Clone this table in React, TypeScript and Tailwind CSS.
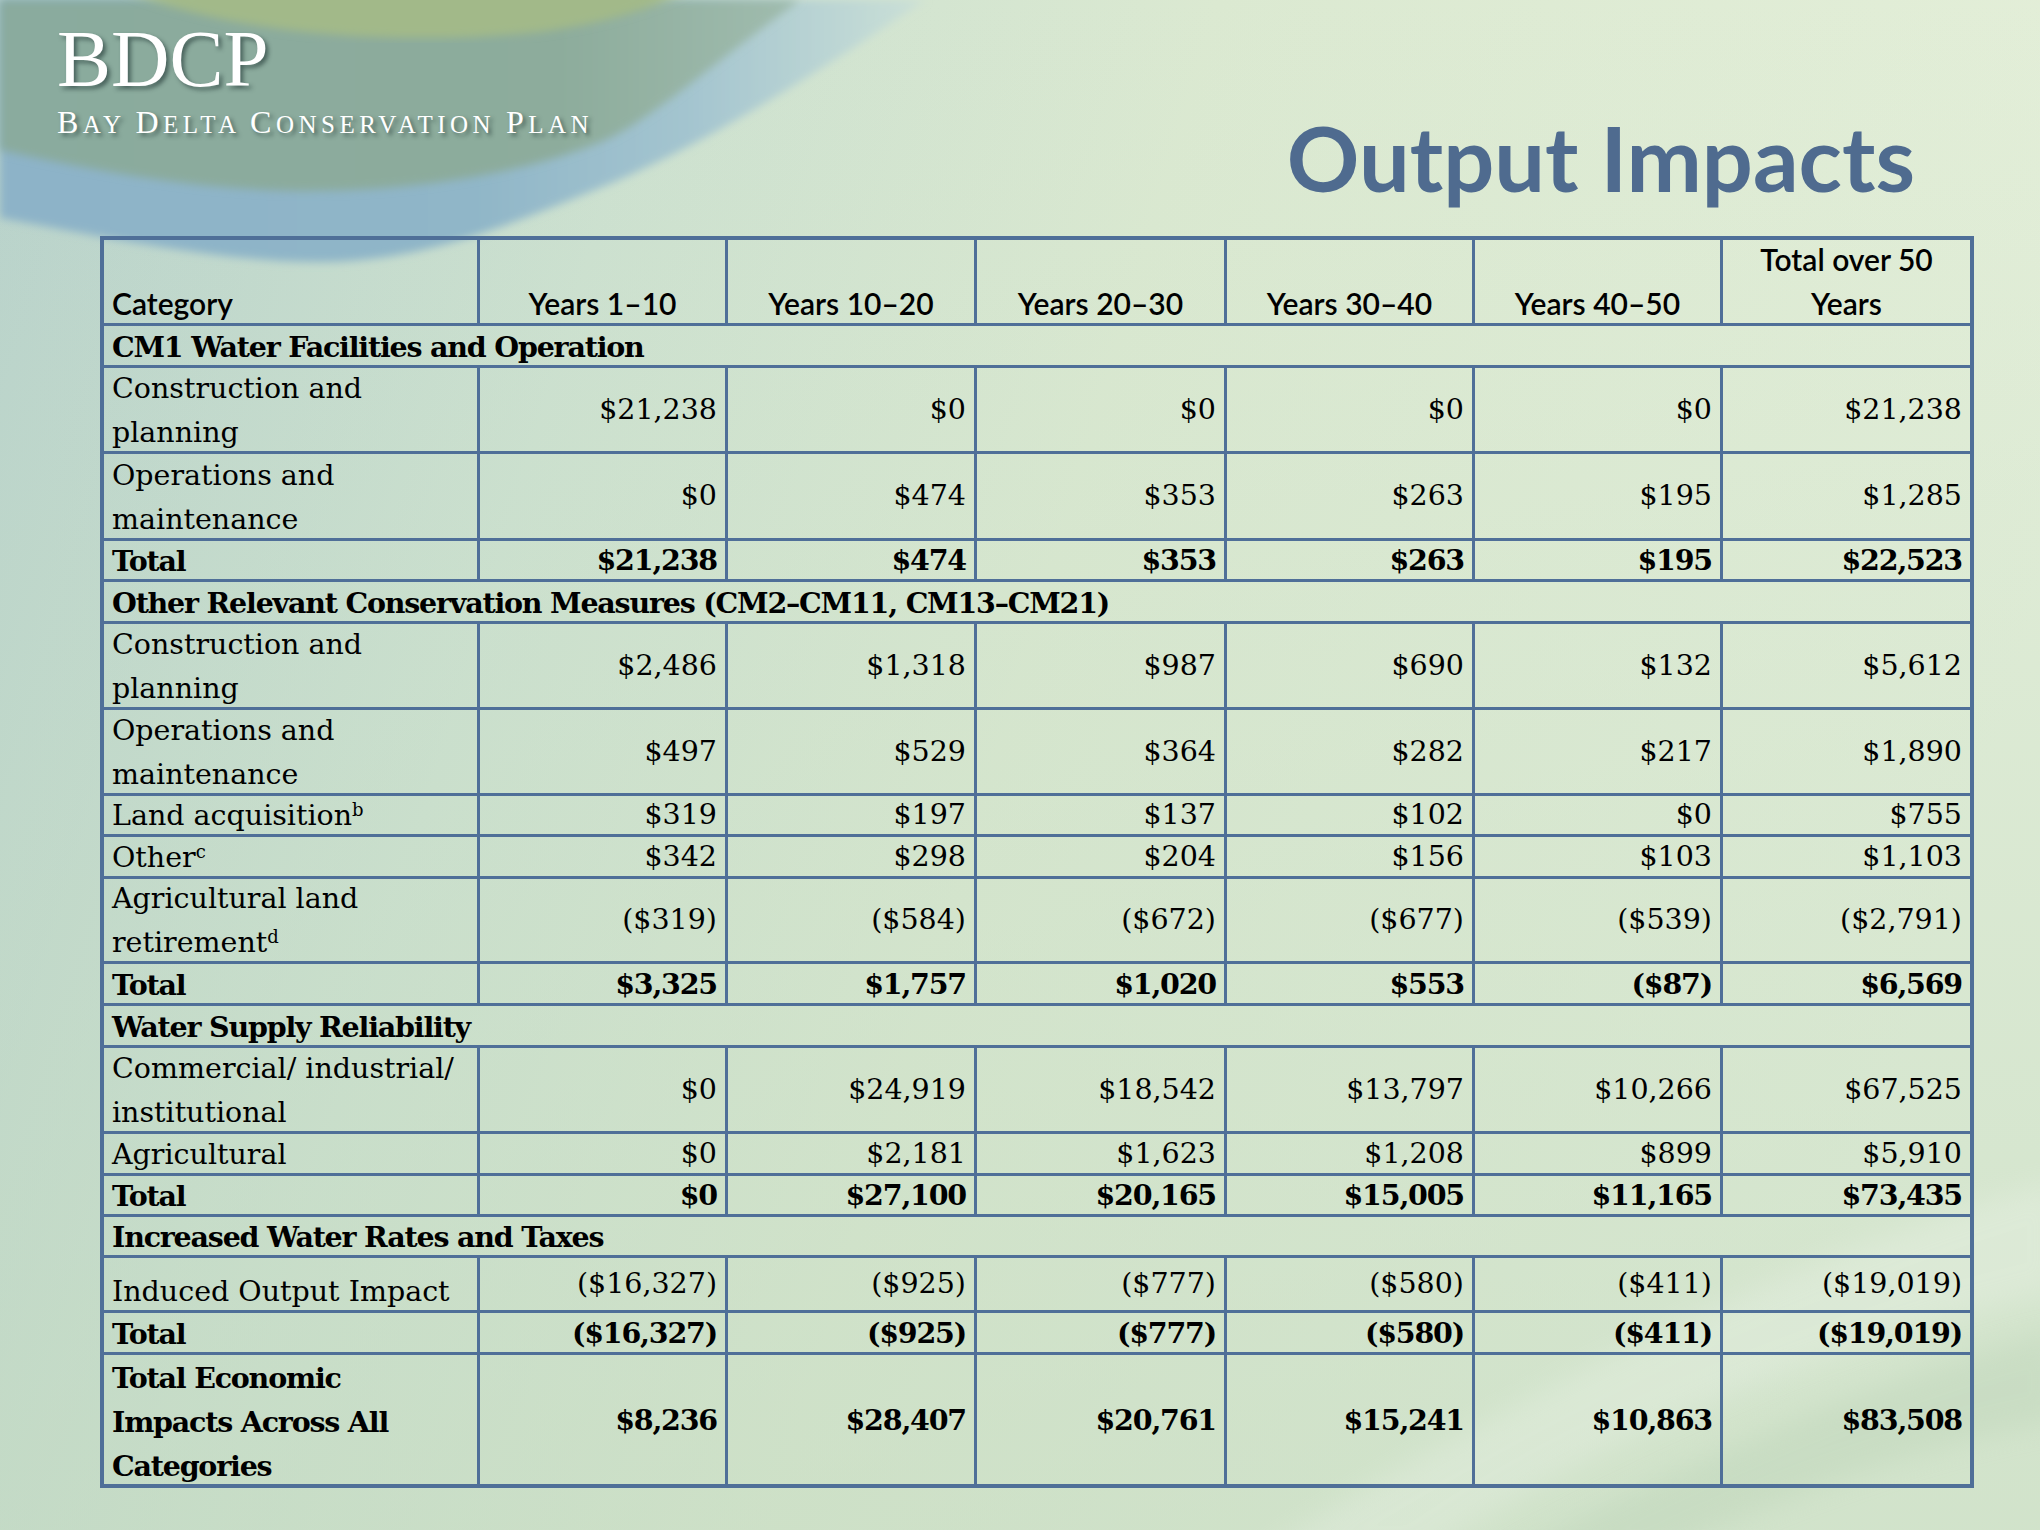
import React from "react";

type Row =
  | { kind: "section"; label: string; h: string }
  | { kind: "data"; label: React.ReactNode; vals: string[]; h: string; bold?: boolean; last?: boolean };

const sup = (s: string) => <sup className="text-[18px]">{s}</sup>;

const rows: Row[] = [
  { kind: "section", label: "CM1 Water Facilities and Operation", h: "h-[42px]" },
  { kind: "data", label: <>Construction and<br />planning</>, vals: ["$21,238", "$0", "$0", "$0", "$0", "$21,238"], h: "h-[86px]" },
  { kind: "data", label: <>Operations and<br />maintenance</>, vals: ["$0", "$474", "$353", "$263", "$195", "$1,285"], h: "h-[87px]" },
  { kind: "data", label: "Total", bold: true, vals: ["$21,238", "$474", "$353", "$263", "$195", "$22,523"], h: "h-[41px]" },
  { kind: "section", label: "Other Relevant Conservation Measures (CM2–CM11, CM13–CM21)", h: "h-[42px]" },
  { kind: "data", label: <>Construction and<br />planning</>, vals: ["$2,486", "$1,318", "$987", "$690", "$132", "$5,612"], h: "h-[86px]" },
  { kind: "data", label: <>Operations and<br />maintenance</>, vals: ["$497", "$529", "$364", "$282", "$217", "$1,890"], h: "h-[86px]" },
  { kind: "data", label: <>Land acquisition{sup("b")}</>, vals: ["$319", "$197", "$137", "$102", "$0", "$755"], h: "h-[41px]" },
  { kind: "data", label: <>Other{sup("c")}</>, vals: ["$342", "$298", "$204", "$156", "$103", "$1,103"], h: "h-[42px]" },
  { kind: "data", label: <>Agricultural land<br />retirement{sup("d")}</>, vals: ["($319)", "($584)", "($672)", "($677)", "($539)", "($2,791)"], h: "h-[85px]" },
  { kind: "data", label: "Total", bold: true, vals: ["$3,325", "$1,757", "$1,020", "$553", "($87)", "$6,569"], h: "h-[42px]" },
  { kind: "section", label: "Water Supply Reliability", h: "h-[42px]" },
  { kind: "data", label: <>Commercial/ industrial/<br />institutional</>, vals: ["$0", "$24,919", "$18,542", "$13,797", "$10,266", "$67,525"], h: "h-[86px]" },
  { kind: "data", label: "Agricultural", vals: ["$0", "$2,181", "$1,623", "$1,208", "$899", "$5,910"], h: "h-[42px]" },
  { kind: "data", label: "Total", bold: true, vals: ["$0", "$27,100", "$20,165", "$15,005", "$11,165", "$73,435"], h: "h-[41px]" },
  { kind: "section", label: "Increased Water Rates and Taxes", h: "h-[41px]" },
  { kind: "data", label: "Induced Output Impact", vals: ["($16,327)", "($925)", "($777)", "($580)", "($411)", "($19,019)"], h: "h-[55px]" },
  { kind: "data", label: "Total", bold: true, vals: ["($16,327)", "($925)", "($777)", "($580)", "($411)", "($19,019)"], h: "h-[42px]" },
  { kind: "data", label: <>Total Economic<br />Impacts Across All<br />Categories</>, bold: true, vals: ["$8,236", "$28,407", "$20,761", "$15,241", "$10,863", "$83,508"], h: "h-[129px]", last: true },
];

const headers = ["Years 1–10", "Years 10–20", "Years 20–30", "Years 30–40", "Years 40–50"];

function Background() {
  return (
    <svg className="absolute inset-0" width="2040" height="1530" viewBox="0 0 2040 1530">
      <defs>
        <linearGradient id="base" x1="0" y1="0" x2="2040" y2="600" gradientUnits="userSpaceOnUse">
          <stop offset="0" stopColor="#b7d1cb" />
          <stop offset="0.3" stopColor="#cde1d0" />
          <stop offset="0.55" stopColor="#dbe9d1" />
          <stop offset="1" stopColor="#e4efd9" />
        </linearGradient>
        <linearGradient id="baseV" x1="0" y1="0" x2="0" y2="1530" gradientUnits="userSpaceOnUse">
          <stop offset="0" stopColor="#c3dbc6" stopOpacity="0" />
          <stop offset="1" stopColor="#c2d9bf" stopOpacity="0.55" />
        </linearGradient>
        <linearGradient id="blue" x1="0" y1="0" x2="950" y2="0" gradientUnits="userSpaceOnUse">
          <stop offset="0" stopColor="#8db3c8" />
          <stop offset="0.5" stopColor="#90b6c8" />
          <stop offset="0.72" stopColor="#a3c4cf" />
          <stop offset="1" stopColor="#cfe3d8" />
        </linearGradient>
        <linearGradient id="teal" x1="0" y1="0" x2="800" y2="0" gradientUnits="userSpaceOnUse">
          <stop offset="0" stopColor="#8aab9e" />
          <stop offset="0.7" stopColor="#8dac9c" />
          <stop offset="1" stopColor="#a0bcae" />
        </linearGradient>
        <filter id="soft" x="-10%" y="-10%" width="120%" height="120%">
          <feGaussianBlur stdDeviation="4" />
        </filter>
        <filter id="soft2" x="-10%" y="-10%" width="120%" height="120%">
          <feGaussianBlur stdDeviation="14" />
        </filter>
      </defs>
      <rect width="2040" height="1530" fill="url(#base)" />
      <rect width="2040" height="1530" fill="url(#baseV)" />
      <path
        d="M0,0 L0,218 C100,236 220,262 320,262 C430,262 520,220 612,183 C700,145 790,90 880,30 L925,0 Z"
        fill="url(#blue)"
        filter="url(#soft)"
      />
      <path
        d="M0,0 L0,150 C100,172 200,190 300,191 C420,192 540,170 612,137 C660,112 705,70 800,0 Z"
        fill="url(#teal)"
        filter="url(#soft)"
      />
      <path d="M120,-10 C240,36 400,46 540,32 C600,24 650,10 690,-10 Z" fill="#a2b989" filter="url(#soft)" />
      <path
        d="M1250,1560 C1500,1400 1780,1260 2060,1180 L2060,1290 C1800,1350 1560,1460 1420,1560 Z"
        fill="#ffffff"
        opacity="0.18"
        filter="url(#soft2)"
      />
      <path
        d="M1500,1560 C1700,1450 1900,1370 2060,1330 L2060,1420 C1900,1450 1750,1510 1650,1560 Z"
        fill="#b8d0b4"
        opacity="0.35"
        filter="url(#soft2)"
      />
    </svg>
  );
}

export default function App() {
  const border = "border-[#4f6f98]";
  const serif = "font-['DejaVu_Serif',serif]";
  const head = "font-['Lato',sans-serif] font-semibold text-[30px] leading-[44px]";
  return (
    <div className="relative w-[2040px] h-[1530px] overflow-hidden bg-[#dce9d2]">
      <Background />
      <div className="relative flex flex-col">
        <div className="flex justify-between h-[236px]">
          <div className="pl-[57px] pt-[19px] text-white font-['Liberation_Serif',serif] [text-shadow:3px_3px_4px_rgba(20,40,40,0.55)]">
            <div className="text-[81px] leading-none">BDCP</div>
            <div className="mt-[6px] leading-none tracking-[4.5px] whitespace-nowrap">
              <span className="text-[32px]">B</span>
              <span className="text-[25px]">AY </span>
              <span className="text-[32px]">D</span>
              <span className="text-[25px]">ELTA </span>
              <span className="text-[32px]">C</span>
              <span className="text-[25px]">ONSERVATION </span>
              <span className="text-[32px]">P</span>
              <span className="text-[25px]">LAN</span>
            </div>
          </div>
          <h1 className="pt-[112px] pr-[125px] text-[90px] leading-none font-bold font-['Lato',sans-serif] text-[#4f6b8f]">
            Output Impacts
          </h1>
        </div>

        <div
          className={`ml-[100px] w-[1874px] border-[4px] ${border} grid grid-cols-[376px_248px_249px_250px_248px_248px_247px] text-black`}
        >
          <div className={`h-[86px] border-r-[3px] border-b-[3px] ${border} flex items-end px-[8px] ${head}`}>
            <span className="-mb-[2px]">Category</span>
          </div>
          {headers.map((h) => (
            <div key={h} className={`h-[86px] border-r-[3px] border-b-[3px] ${border} flex items-end justify-center ${head}`}>
              <span className="-mb-[2px]">{h}</span>
            </div>
          ))}
          <div className={`h-[86px] border-b-[3px] ${border} flex items-end justify-center text-center ${head}`}>
            <span className="-mb-[2px]">
              Total over 50
              <br />
              Years
            </span>
          </div>

          {rows.map((r, i) => {
            if (r.kind === "section") {
              return (
                <div
                  key={i}
                  className={`col-span-7 ${r.h} border-b-[3px] ${border} flex items-end px-[8px] ${serif} font-bold tracking-[-1.2px] text-[28.5px] leading-[44px] whitespace-nowrap`}
                >
                  <span className="-mb-[4px]">{r.label}</span>
                </div>
              );
            }
            const weight = r.bold ? "font-bold tracking-[-1.2px]" : "font-normal";
            const bb = r.last ? "" : "border-b-[3px]";
            return (
              <React.Fragment key={i}>
                <div
                  className={`${r.h} border-r-[3px] ${bb} ${border} flex items-end px-[8px] ${serif} ${weight} text-[28.5px] leading-[44px] whitespace-nowrap`}
                >
                  <span className="-mb-[4px]">{r.label}</span>
                </div>
                {r.vals.map((v, j) => (
                  <div
                    key={j}
                    className={`${r.h} ${j < 5 ? "border-r-[3px]" : ""} ${bb} ${border} flex items-center justify-end pr-[8px] ${serif} ${weight} text-[28.5px] leading-[44px] whitespace-nowrap`}
                  >
                    {v}
                  </div>
                ))}
              </React.Fragment>
            );
          })}
        </div>
      </div>
    </div>
  );
}
